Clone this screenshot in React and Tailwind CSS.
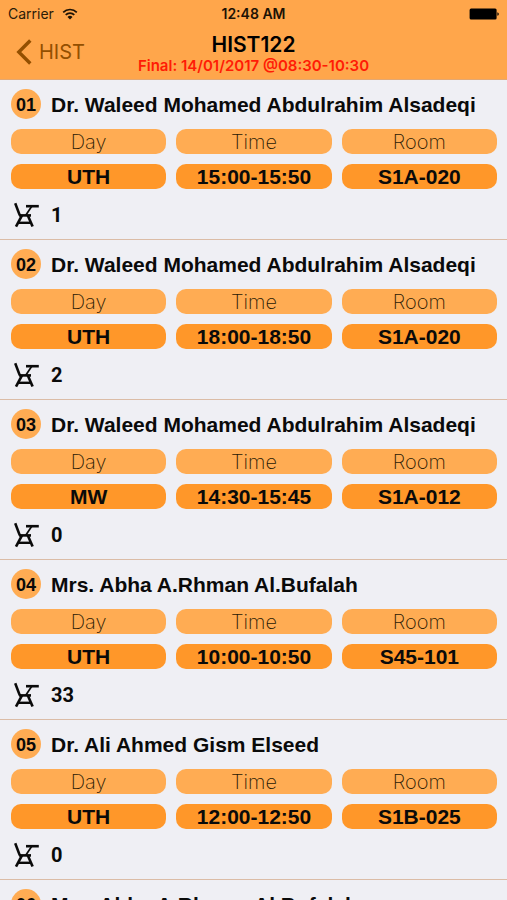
const sections = [
  { no: '01', name: 'Dr. Waleed Mohamed Abdulrahim Alsadeqi', day: 'UTH', time: '15:00-15:50', room: 'S1A-020', seats: 1 },
  { no: '02', name: 'Dr. Waleed Mohamed Abdulrahim Alsadeqi', day: 'UTH', time: '18:00-18:50', room: 'S1A-020', seats: 2 },
  { no: '03', name: 'Dr. Waleed Mohamed Abdulrahim Alsadeqi', day: 'MW', time: '14:30-15:45', room: 'S1A-012', seats: 0 },
  { no: '04', name: 'Mrs. Abha A.Rhman Al.Bufalah', day: 'UTH', time: '10:00-10:50', room: 'S45-101', seats: 33 },
  { no: '05', name: 'Dr. Ali Ahmed Gism Elseed', day: 'UTH', time: '12:00-12:50', room: 'S1B-025', seats: 0 },
  { no: '06', name: 'Mrs. Abha A.Rhman Al.Bufalah', day: 'UTH', time: '11:00-11:50', room: 'S45-101', seats: 12 },
];

function WifiIcon() {
  return (
    <svg viewBox="0 0 16 12" className="h-3 w-4" fill="none" stroke="#1c1205" strokeWidth="1.7" aria-hidden="true">
      <path d="M1.2 4.3 A9.6 9.6 0 0 1 14.8 4.3" />
      <path d="M3.7 6.9 A6.1 6.1 0 0 1 12.3 6.9" />
      <path d="M8 11.6 L5.5 9 A3.5 3.5 0 0 1 10.5 9 Z" fill="#1c1205" stroke="none" />
    </svg>
  );
}

function BatteryIcon() {
  return (
    <svg viewBox="0 0 30 12" className="h-3 w-[30px]" fill="#000" aria-hidden="true">
      <rect x="0.6" y="0.5" width="27" height="11" rx="1.5" />
      <path d="M28.4 4.2 Q29.8 4.6 29.8 6 Q29.8 7.4 28.4 7.8 Z" />
    </svg>
  );
}

function SeatIcon() {
  return (
    <svg viewBox="0 0 26 26" className="h-[26px] w-[26px]" fill="none" stroke="#0a0a0a" aria-hidden="true">
      <path d="M1.2 1.2 L5.8 13.4" strokeWidth="2.6" />
      <path d="M5 13.4 H17" strokeWidth="2.6" />
      <path d="M12 4.2 H24.8" strokeWidth="2.6" />
      <path d="M17.6 4.6 L11.6 13.4" strokeWidth="1.7" />
      <path d="M8 13.4 L2 24.6" strokeWidth="2.6" />
      <path d="M13.8 13.4 L18.6 24.6" strokeWidth="2.6" />
      <path d="M4.2 20.8 H17" strokeWidth="2.4" />
    </svg>
  );
}

function Section({ section }) {
  return (
    <li className="border-b border-[#dbbca6] pt-[9px] pr-[10px] pb-[11px] pl-[11px]">
      <div className="flex items-center gap-[10px]">
        <span className="flex h-[30px] w-[30px] shrink-0 items-center justify-center rounded-full bg-[#ffac53] pt-[2px] text-[18px] leading-[28px] font-bold">
          {section.no}
        </span>
        <h2 className="truncate pt-[2px] text-[21px] leading-[28px] font-bold">{section.name}</h2>
      </div>
      <table className="-mx-[10px] w-[calc(100%+20px)] table-fixed border-separate border-spacing-x-[10px] border-spacing-y-[10px] text-center">
        <thead>
          <tr>
            {['Day', 'Time', 'Room'].map((label) => (
              <th key={label} scope="col" className="h-[25px] rounded-[10px] bg-[#ffac53] p-0 pt-[2px] font-['Inter',sans-serif] text-[20px] leading-[23px] font-extralight text-[#2a1a04]">
                {label}
              </th>
            ))}
          </tr>
        </thead>
        <tbody>
          <tr>
            {[section.day, section.time, section.room].map((value) => (
              <td key={value} className="h-[25px] rounded-[10px] bg-[#ff9729] p-0 text-[21px] leading-[25px] font-bold">
                {value}
              </td>
            ))}
          </tr>
        </tbody>
      </table>
      <div className="flex items-center gap-[11px] pt-[3px] pl-[3px]">
        <SeatIcon />
        <span className="font-['Liberation_Sans_Narrow','Roboto',sans-serif] text-[20px] leading-[26px] font-bold">{section.seats}</span>
      </div>
    </li>
  );
}

export default function App() {
  return (
    <div className="flex h-screen flex-col bg-[#efeff4] font-['Liberation_Sans',Arial,sans-serif] text-[#0a0a0a]">
      <header className="shrink-0 border-b border-[#e3a873] bg-[#ffa64b] font-['Inter',sans-serif]">
        <div className="grid grid-cols-3 items-center px-2 pt-1 text-[14px] leading-5">
          <div className="flex items-center gap-2 text-[#2b1b08]">
            <span>Carrier</span>
            <WifiIcon />
          </div>
          <time className="text-center font-semibold text-[#1c1205]">12:48 AM</time>
          <div className="flex justify-end">
            <BatteryIcon />
          </div>
        </div>
        <div className="grid grid-cols-[1fr_auto_1fr] items-center pt-[9px] pb-1">
          <a href="#hist" className="flex items-center gap-[7px] pb-1 pl-4 text-[20px] leading-6 text-[#934f00]">
            <svg viewBox="0 0 16 26" className="h-[26px] w-4" fill="none" stroke="currentColor" strokeWidth="3.4" aria-hidden="true">
              <path d="M14.3 1.5 L2.8 13 L14.3 24.5" />
            </svg>
            HIST
          </a>
          <div className="text-center">
            <h1 className="text-[21px] leading-6 font-semibold text-black">HIST122</h1>
            <p className="text-[15px] leading-[18px] font-semibold text-[#ff1c05]">Final: 14/01/2017 @08:30-10:30</p>
          </div>
        </div>
      </header>
      <main className="min-h-0 flex-1 overflow-y-auto [scrollbar-width:none]">
        <ul>
          {sections.map((section) => (
            <Section key={section.no} section={section} />
          ))}
        </ul>
      </main>
    </div>
  );
}
